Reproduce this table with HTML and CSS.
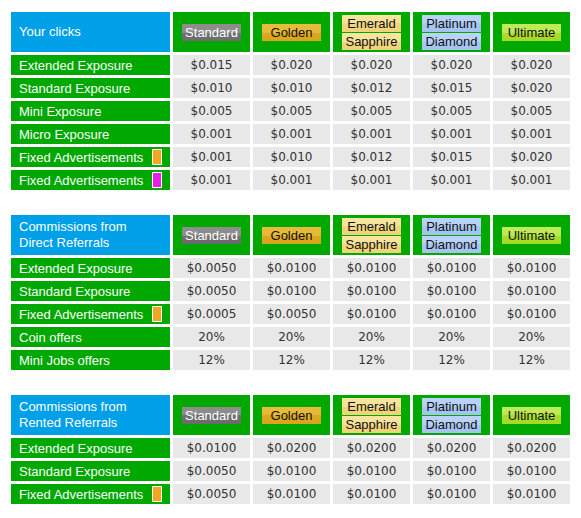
FILE: index.html
```html
<!DOCTYPE html>
<html>
<head>
<meta charset="utf-8">
<link rel="stylesheet" href="styles.css">
</head>
<body>
<div class="page">
  <div class="grid">
    <div class="head-label">Your clicks</div>
    <div class="head"><span class="badge std">Standard</span></div>
    <div class="head"><span class="badge gold">Golden</span></div>
    <div class="head stack"><span class="badge emer">Emerald</span><span class="badge emer">Sapphire</span></div>
    <div class="head stack"><span class="badge plat">Platinum</span><span class="badge plat">Diamond</span></div>
    <div class="head"><span class="badge ult">Ultimate</span></div>

    <div class="label">Extended Exposure</div>
    <div class="val">$0.015</div><div class="val">$0.020</div><div class="val">$0.020</div><div class="val">$0.020</div><div class="val">$0.020</div>

    <div class="label">Standard Exposure</div>
    <div class="val">$0.010</div><div class="val">$0.010</div><div class="val">$0.012</div><div class="val">$0.015</div><div class="val">$0.020</div>

    <div class="label">Mini Exposure</div>
    <div class="val">$0.005</div><div class="val">$0.005</div><div class="val">$0.005</div><div class="val">$0.005</div><div class="val">$0.005</div>

    <div class="label">Micro Exposure</div>
    <div class="val">$0.001</div><div class="val">$0.001</div><div class="val">$0.001</div><div class="val">$0.001</div><div class="val">$0.001</div>

    <div class="label">Fixed Advertisements <span class="sq orange"></span></div>
    <div class="val">$0.001</div><div class="val">$0.010</div><div class="val">$0.012</div><div class="val">$0.015</div><div class="val">$0.020</div>

    <div class="label">Fixed Advertisements <span class="sq magenta"></span></div>
    <div class="val">$0.001</div><div class="val">$0.001</div><div class="val">$0.001</div><div class="val">$0.001</div><div class="val">$0.001</div>
  </div>

  <div class="grid">
    <div class="head-label">Commissions from<br>Direct Referrals</div>
    <div class="head"><span class="badge std">Standard</span></div>
    <div class="head"><span class="badge gold">Golden</span></div>
    <div class="head stack"><span class="badge emer">Emerald</span><span class="badge emer">Sapphire</span></div>
    <div class="head stack"><span class="badge plat">Platinum</span><span class="badge plat">Diamond</span></div>
    <div class="head"><span class="badge ult">Ultimate</span></div>

    <div class="label">Extended Exposure</div>
    <div class="val">$0.0050</div><div class="val">$0.0100</div><div class="val">$0.0100</div><div class="val">$0.0100</div><div class="val">$0.0100</div>

    <div class="label">Standard Exposure</div>
    <div class="val">$0.0050</div><div class="val">$0.0100</div><div class="val">$0.0100</div><div class="val">$0.0100</div><div class="val">$0.0100</div>

    <div class="label">Fixed Advertisements <span class="sq orange"></span></div>
    <div class="val">$0.0005</div><div class="val">$0.0050</div><div class="val">$0.0100</div><div class="val">$0.0100</div><div class="val">$0.0100</div>

    <div class="label">Coin offers</div>
    <div class="val">20%</div><div class="val">20%</div><div class="val">20%</div><div class="val">20%</div><div class="val">20%</div>

    <div class="label">Mini Jobs offers</div>
    <div class="val">12%</div><div class="val">12%</div><div class="val">12%</div><div class="val">12%</div><div class="val">12%</div>
  </div>

  <div class="grid">
    <div class="head-label">Commissions from<br>Rented Referrals</div>
    <div class="head"><span class="badge std">Standard</span></div>
    <div class="head"><span class="badge gold">Golden</span></div>
    <div class="head stack"><span class="badge emer">Emerald</span><span class="badge emer">Sapphire</span></div>
    <div class="head stack"><span class="badge plat">Platinum</span><span class="badge plat">Diamond</span></div>
    <div class="head"><span class="badge ult">Ultimate</span></div>

    <div class="label">Extended Exposure</div>
    <div class="val">$0.0100</div><div class="val">$0.0200</div><div class="val">$0.0200</div><div class="val">$0.0200</div><div class="val">$0.0200</div>

    <div class="label">Standard Exposure</div>
    <div class="val">$0.0050</div><div class="val">$0.0100</div><div class="val">$0.0100</div><div class="val">$0.0100</div><div class="val">$0.0100</div>

    <div class="label">Fixed Advertisements <span class="sq orange"></span></div>
    <div class="val">$0.0050</div><div class="val">$0.0100</div><div class="val">$0.0100</div><div class="val">$0.0100</div><div class="val">$0.0100</div>
  </div>
</div>
</body>
</html>
```

FILE: styles.css
```css
html, body {
  margin: 0;
  padding: 0;
  background: #ffffff;
}

.page {
  padding: 9px 0 0 8px;
  display: flex;
  flex-direction: column;
  gap: 19px;
}

.grid {
  display: grid;
  grid-template-columns: 159px repeat(5, 77px);
  grid-template-rows: 40px;
  grid-auto-rows: 20px;
  gap: 3px;
  padding: 3px;
  width: max-content;
}

.head-label {
  background: #00a0e9;
  color: #ffffff;
  font-family: "Liberation Sans", Arial, sans-serif;
  font-size: 13px;
  line-height: 16px;
  padding-left: 8px;
  display: flex;
  align-items: center;
}

.head {
  background: #00a800;
  display: flex;
  align-items: center;
  justify-content: center;
}

.head.stack {
  flex-direction: column;
  gap: 1px;
}

.badge {
  display: block;
  width: 59px;
  height: 17px;
  line-height: 17px;
  text-align: center;
  font-family: "Liberation Sans", Arial, sans-serif;
  font-size: 13px;
  color: #111111;
}

.badge.std {
  color: #ffffff;
  background: linear-gradient(#8d8d8d 0%, #8d8d8d 50%, #707070 50%, #6c6c6c 100%);
}

.badge.gold {
  background: linear-gradient(#e8bc3c 0%, #e6b836 50%, #dca820 50%, #daa51c 100%);
}

.badge.emer {
  background: linear-gradient(#f8e6a0 0%, #f6e198 50%, #f1d67e 50%, #efd378 100%);
}

.badge.plat {
  background: linear-gradient(#bcd4fa 0%, #b6d0f8 50%, #a8c6f2 50%, #a4c3f0 100%);
}

.badge.ult {
  background: linear-gradient(#c0ec5a 0%, #bae852 50%, #a9dc2c 50%, #a5d926 100%);
}

.label {
  background: #00a800;
  color: #ffffff;
  font-family: "Liberation Sans", Arial, sans-serif;
  font-size: 13px;
  padding: 0 8px;
  display: flex;
  align-items: center;
  justify-content: space-between;
  white-space: nowrap;
}

.sq {
  display: block;
  width: 8px;
  height: 14px;
  border: 1px solid #ffffff;
}

.sq.orange {
  background: #f0a820;
}

.sq.magenta {
  background: #e81ee8;
}

.val {
  background: #e8e8e8;
  color: #333333;
  font-family: "DejaVu Sans", Verdana, sans-serif;
  font-size: 12px;
  display: flex;
  align-items: center;
  justify-content: center;
}
```
